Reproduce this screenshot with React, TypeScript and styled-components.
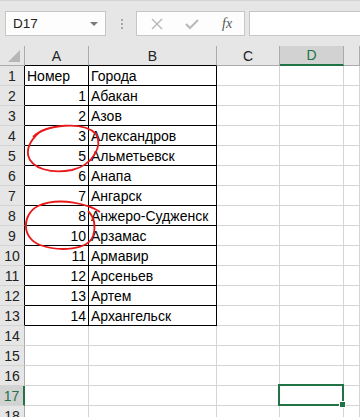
import React from "react";
import styled, { createGlobalStyle } from "styled-components";

const GREEN = "#217346";
const GRID = "#d4d4d4";

const GlobalStyle = createGlobalStyle`
  body {
    margin: 0;
    background: #fff;
    font-family: "Liberation Sans", Arial, sans-serif;
  }
`;

const rows: { num: string; city: string }[] = [
  { num: "Номер", city: "Города" },
  { num: "1", city: "Абакан" },
  { num: "2", city: "Азов" },
  { num: "3", city: "Александров" },
  { num: "5", city: "Альметьевск" },
  { num: "6", city: "Анапа" },
  { num: "7", city: "Ангарск" },
  { num: "8", city: "Анжеро-Судженск" },
  { num: "10", city: "Арзамас" },
  { num: "11", city: "Армавир" },
  { num: "12", city: "Арсеньев" },
  { num: "13", city: "Артем" },
  { num: "14", city: "Архангельск" },
];

const columns = ["A", "B", "C", "D", ""];

function App() {
  const allRows = Array.from({ length: 18 }, (_, i) => i + 1);
  return (
    <Page>
      <GlobalStyle />
      <Toolbar>
        <NameBox>
          <span>D17</span>
          <DropArrow />
        </NameBox>
        <Handle>
          <i />
          <i />
          <i />
        </Handle>
        <FormulaButtons>
          <svg width="14" height="14" viewBox="0 0 14 14">
            <path d="M2 2 L12 12 M12 2 L2 12" stroke="#b4b4b4" strokeWidth="1.3" fill="none" />
          </svg>
          <svg width="16" height="14" viewBox="0 0 16 14">
            <path d="M2 7 L6 11 L14 3" stroke="#b8b8b8" strokeWidth="2" fill="none" />
          </svg>
          <Fx>fx</Fx>
        </FormulaButtons>
        <FormulaInput />
      </Toolbar>
      <Sheet>
        <Corner>
          <svg width="14" height="14" viewBox="0 0 14 14">
            <path d="M13 1 L13 13 L1 13 Z" fill="#b6b6b6" />
          </svg>
        </Corner>
        {columns.map((c, i) => (
          <ColHeader key={c + i} $active={c === "D"} $boxed={i < 2}>
            {c}
          </ColHeader>
        ))}
        {allRows.map((r) => {
          const data = rows[r - 1];
          const boxed = !!data;
          return (
            <React.Fragment key={r}>
              <RowHeader $active={r === 17} $boxed={boxed}>
                {r}
              </RowHeader>
              <Cell $boxed={boxed} $right={r > 1}>
                {data?.num}
              </Cell>
              <Cell $boxed={boxed}>{data?.city}</Cell>
              <Cell />
              <Cell $selected={r === 17}>{r === 17 && <FillHandle />}</Cell>
              <Cell />
            </React.Fragment>
          );
        })}
      </Sheet>
      <Marks width="360" height="417" viewBox="0 0 360 417">
        <path
          d="M33 137 C 46 124, 84 121, 96 134 C 103 146, 93 165, 72 170 C 52 174, 31 169, 28 155 C 27 147, 31 139, 41 131"
          stroke="#e8191b"
          strokeWidth="1.8"
          fill="none"
        />
        <path
          d="M100 212 C 90 205, 60 196, 38 206 C 22 214, 21 238, 40 245 C 60 252, 88 250, 93 236 C 96 226, 95 218, 88 211"
          stroke="#e8191b"
          strokeWidth="1.8"
          fill="none"
        />
      </Marks>
    </Page>
  );
}

export default App;

const Page = styled.div`
  position: relative;
  width: 360px;
  height: 417px;
  overflow: hidden;
  background: #fff;
`;

const Toolbar = styled.div`
  display: flex;
  align-items: flex-start;
  height: 46px;
  box-sizing: border-box;
  padding: 10px 0 0 5px;
  background: #e6e6e6;
  border-top: 1px solid #d4d4d4;
`;

const NameBox = styled.div`
  display: flex;
  align-items: center;
  justify-content: space-between;
  width: 101px;
  height: 25px;
  box-sizing: border-box;
  padding: 0 7px 0 7px;
  background: #fdfdfd;
  border: 1px solid #c6c6c6;
  font-size: 13.5px;
  color: #222;
`;

const DropArrow = styled.span`
  width: 0;
  height: 0;
  border-left: 4px solid transparent;
  border-right: 4px solid transparent;
  border-top: 4px solid #7a7a7a;
`;

const Handle = styled.div`
  display: flex;
  flex-direction: column;
  gap: 2px;
  margin: 8px 13px 0 15px;
  i {
    width: 2px;
    height: 2px;
    background: #a8a8a8;
  }
`;

const FormulaButtons = styled.div`
  display: flex;
  align-items: center;
  gap: 20px;
  width: 109px;
  height: 25px;
  box-sizing: border-box;
  padding: 0 0 0 13px;
  background: #fdfdfd;
  border: 1px solid #c6c6c6;
`;

const Fx = styled.span`
  font-family: "Liberation Serif", "Times New Roman", serif;
  font-style: italic;
  font-size: 14px;
  color: #555;
  margin-left: 2px;
`;

const FormulaInput = styled.div`
  flex: 1;
  height: 25px;
  box-sizing: border-box;
  margin-left: 4px;
  background: #fff;
  border: 1px solid #c6c6c6;
  border-right: none;
`;

const Sheet = styled.div`
  display: grid;
  grid-template-columns: 25px 64px 128px 63px 64px 1fr;
  grid-auto-rows: 20px;
  font-size: 14px;
  color: #000;
`;

const HeaderBase = styled.div`
  display: flex;
  align-items: center;
  justify-content: center;
  box-sizing: border-box;
  background: #e6e6e6;
  color: #222;
`;

const Corner = styled(HeaderBase)`
  justify-content: flex-end;
  align-items: flex-end;
  padding: 0 3px 2px 0;
  border-right: 1px solid #ababab;
  border-bottom: 1px solid #ababab;
`;

const ColHeader = styled(HeaderBase)<{ $active?: boolean; $boxed?: boolean }>`
  border-right: 1px solid #ababab;
  border-bottom: ${(p) =>
    p.$active ? `2px solid ${GREEN}` : p.$boxed ? "1px solid #000" : "1px solid #ababab"};
  background: ${(p) => (p.$active ? "#d2d2d2" : "#e6e6e6")};
  color: ${(p) => (p.$active ? GREEN : "#222")};
`;

const RowHeader = styled(HeaderBase)<{ $active?: boolean; $boxed?: boolean }>`
  border-bottom: 1px solid ${GRID};
  border-right: ${(p) =>
    p.$active ? `2px solid ${GREEN}` : p.$boxed ? "1px solid #000" : "1px solid #ababab"};
  background: ${(p) => (p.$active ? "#d2d2d2" : "#e6e6e6")};
  color: ${(p) => (p.$active ? GREEN : "#222")};
`;

const Cell = styled.div<{ $boxed?: boolean; $right?: boolean; $selected?: boolean }>`
  position: relative;
  display: flex;
  align-items: center;
  justify-content: ${(p) => (p.$right ? "flex-end" : "flex-start")};
  box-sizing: border-box;
  padding: 0 2px;
  white-space: nowrap;
  overflow: visible;
  border-right: 1px solid ${(p) => (p.$boxed ? "#000" : GRID)};
  border-bottom: 1px solid ${(p) => (p.$boxed ? "#000" : GRID)};
  ${(p) =>
    p.$selected &&
    `
    &::after {
      content: "";
      position: absolute;
      left: -2px;
      top: -2px;
      right: -1px;
      bottom: -1px;
      border: 2px solid ${GREEN};
    }
  `}
`;

const FillHandle = styled.span`
  position: absolute;
  right: -3px;
  bottom: -3px;
  width: 5px;
  height: 5px;
  background: ${GREEN};
  border: 1px solid #fff;
  z-index: 2;
`;

const Marks = styled.svg`
  position: absolute;
  left: 0;
  top: 0;
  pointer-events: none;
`;
